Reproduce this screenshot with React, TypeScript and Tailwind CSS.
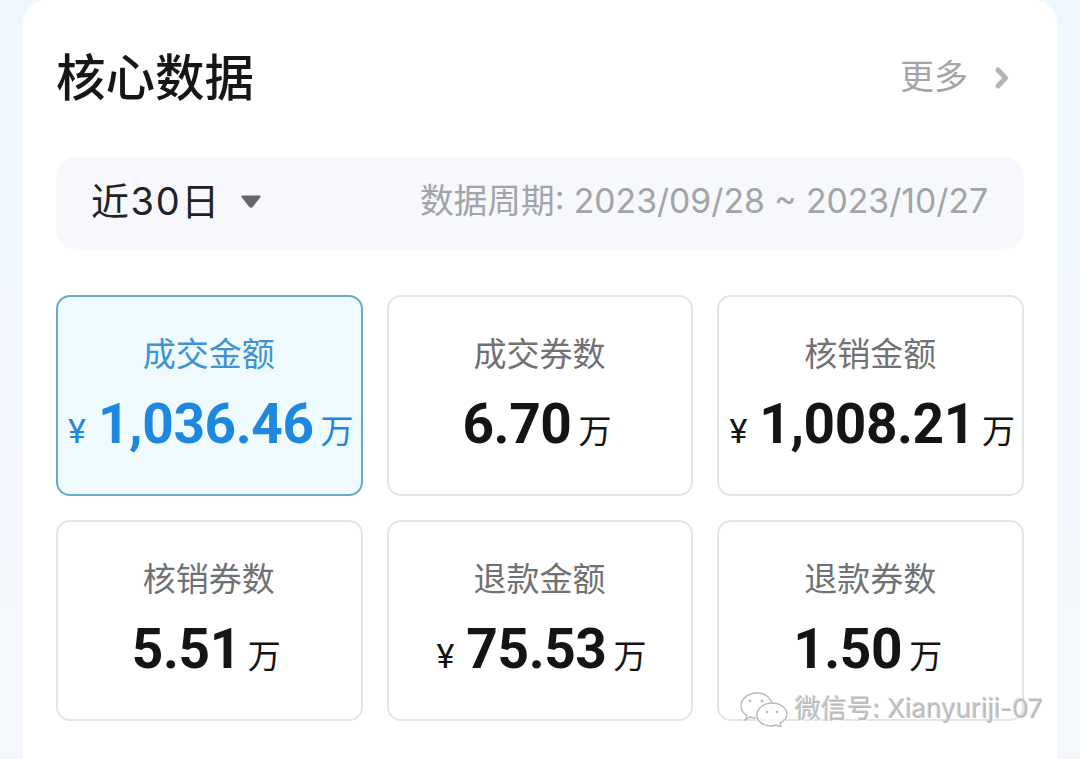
const sans = "font-['Inter','Noto_Sans_CJK_SC',sans-serif]";

type Tile = { label: string; value: string; yen?: boolean; active?: boolean };

const tiles: Tile[] = [
  { label: "成交金额", value: "1,036.46", yen: true, active: true },
  { label: "成交券数", value: "6.70" },
  { label: "核销金额", value: "1,008.21", yen: true },
  { label: "核销券数", value: "5.51" },
  { label: "退款金额", value: "75.53", yen: true },
  { label: "退款券数", value: "1.50" },
];

function StatTile({ label, value, yen, active }: Tile) {
  return (
    <div
      className={
        active
          ? "h-[201px] rounded-[14px] border-2 border-[#6aa9cb] bg-[#eefafe] flex flex-col items-center pt-[35px] text-[#1e88e0]"
          : "h-[201px] rounded-[14px] border-2 border-[#e4e5e7] bg-white flex flex-col items-center pt-[35px] text-[#141414]"
      }
    >
      <div
        className={
          active
            ? "text-[33px] leading-[44px] -ml-[1px] text-[#3d93d4]"
            : "text-[33px] leading-[44px] -ml-[1px] text-[#6f7174]"
        }
      >
        {label}
      </div>
      <div
        className={
          yen
            ? "mt-[13px] ml-[3px] flex items-baseline whitespace-nowrap"
            : "mt-[13px] -ml-[6px] flex items-baseline whitespace-nowrap"
        }
      >
        {yen && <span className="text-[34px] mr-[12px] font-['Roboto',sans-serif]">¥</span>}
        <span className="text-[55px] leading-[70px] font-bold tracking-[-0.4px] font-['Roboto',sans-serif]">{value}</span>
        <span className="text-[33px] ml-[7px] -mt-[1px]">万</span>
      </div>
    </div>
  );
}

function WeChatMark() {
  return (
    <svg width="50" height="36" viewBox="0 0 50 36" fill="none" stroke="#b9b9b9" strokeWidth="1.4">
      <path d="M18 2C9 2 2 8 2 15c0 4 2 7 6 10l-2 4 5-3c2 1 4 1 6 1" fill="#fff" fillOpacity="0.7" />
      <path d="M18 2c8 0 14 5 15 11" />
      <path d="M33 12c-8 0-15 5-15 12s7 11 14 11c2 0 3 0 5-1l5 2-1-4c4-2 7-5 7-9 0-6-7-11-15-11z" fill="#fff" fillOpacity="0.7" />
      <circle cx="11" cy="10" r="1.4" fill="#b9b9b9" stroke="none" />
      <circle cx="23" cy="10" r="1.4" fill="#b9b9b9" stroke="none" />
      <circle cx="28" cy="21" r="1.3" fill="#b9b9b9" stroke="none" />
      <circle cx="38" cy="21" r="1.3" fill="#b9b9b9" stroke="none" />
    </svg>
  );
}

export default function App() {
  return (
    <div className={`relative h-[759px] w-[1080px] overflow-hidden bg-gradient-to-b from-[#f0f8ff] to-[#f5f7fc] pl-[23px] ${sans}`}>
      <div className="h-[780px] w-[1034px] rounded-t-[24px] bg-white px-[33px] pt-[44px]">
        <div className="flex items-center justify-between h-[64px]">
          <h1 className="text-[49.5px] leading-[64px] font-medium text-[#161616] translate-y-[2px]">核心数据</h1>
          <div className="flex items-center pr-[15px] text-[#a3a5a8]">
            <span className="text-[34px] leading-[44px] translate-y-[1px]">更多</span>
            <svg className="ml-[27px] translate-y-[2px]" width="14" height="22" viewBox="0 0 14 22" fill="none">
              <path d="M3 3l7.500 8-7.500 8" stroke="#b3b4b6" strokeWidth="5" strokeLinecap="round" strokeLinejoin="round" />
            </svg>
          </div>
        </div>

        <div className="mt-[49px] flex h-[93px] items-center justify-between rounded-[20px] bg-[#f6f8fb] pl-[35px] pr-[36px]">
          <div className="flex items-center -translate-y-[3px]">
            <span className="text-[38px] leading-[48px] tracking-[1.6px] text-[#222]">近30日</span>
            <svg className="ml-[19px] translate-y-[1px]" width="22" height="16" viewBox="0 0 22 16">
              <path d="M2.500 1.500h17c1 0 1.500 1 .8 1.800l-7.600 9.600c-.9 1.100-2.500 1.100-3.400 0L1.700 3.300C1 2.500 1.500 1.500 2.500 1.500z" fill="#64666a" />
            </svg>
          </div>
          <span className="text-[33.7px] leading-[44px] text-[#a2a4a8] -translate-y-[3px]">数据周期: 2023/09/28 ~ 2023/10/27</span>
        </div>

        <div className="mt-[45px] grid grid-cols-3 gap-x-[24px] gap-y-[24px]">
          {tiles.map((t) => (
            <StatTile key={t.label} {...t} />
          ))}
        </div>
      </div>

      <div className="absolute left-[739px] top-[691px] flex items-center gap-[6px]">
        <WeChatMark />
        <span className="text-[26px] leading-[34px] text-[#bcbcbc] [text-shadow:1px_1px_0_#fff,-1px_-1px_0_#d8d8d8]">微信号: Xianyuriji-07</span>
      </div>
    </div>
  );
}
